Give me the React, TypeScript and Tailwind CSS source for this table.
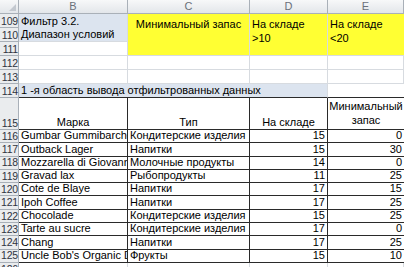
const data = [
    { n: 116, name: 'Gumbar Gummibarche', type: 'Кондитерские изделия', stock: 15, min: 0 },
    { n: 117, name: 'Outback Lager', type: 'Напитки', stock: 15, min: 30 },
    { n: 118, name: 'Mozzarella di Giovann', type: 'Молочные продукты', stock: 14, min: 0 },
    { n: 119, name: 'Gravad lax', type: 'Рыбопродукты', stock: 11, min: 25 },
    { n: 120, name: 'Cote de Blaye', type: 'Напитки', stock: 17, min: 15 },
    { n: 121, name: 'Ipoh Coffee', type: 'Напитки', stock: 17, min: 25 },
    { n: 122, name: 'Chocolade', type: 'Кондитерские изделия', stock: 15, min: 25 },
    { n: 123, name: 'Tarte au sucre', type: 'Кондитерские изделия', stock: 17, min: 0 },
    { n: 124, name: 'Chang', type: 'Напитки', stock: 17, min: 25 },
    { n: 125, name: "Uncle Bob's Organic D", type: 'Фрукты', stock: 15, min: 10 },
];

const colHead = 'flex items-center justify-center border-r border-b border-[#a9b0b8] bg-gradient-to-b from-[#f7f8f9] to-[#e3e6ea] text-[#6a707a]';
const rowHead = 'flex items-end justify-end border-r border-b border-[#a9b0b8] bg-[#eaecee] text-[#2f3440] text-[10.5px] tracking-[-0.2px] leading-none pb-[1px]';
const grid = 'border-r border-b border-[#d7dbe0] bg-white';
const tbl = 'border-r border-b border-[#2a2a2a] bg-white overflow-hidden whitespace-nowrap flex items-end pb-[1px] leading-none';

export default function App() {
    return (
        <div className="w-[404px] h-[267px] overflow-hidden bg-white font-['Liberation_Sans',Arial,sans-serif] text-[11px] text-black">
            <div className="grid grid-cols-[19px_109px_122px_78px_76px] grid-rows-[14px_repeat(6,14px)_32px_repeat(11,13.3px)]">
                {/* header */}
                <div className={`${colHead} relative`}>
                    <span className="absolute right-[2px] bottom-[2px] w-0 h-0 border-l-[7px] border-l-transparent border-b-[7px] border-b-[#c3c8cf]" />
                </div>
                <div className={colHead}>B</div>
                <div className={colHead}>C</div>
                <div className={colHead}>D</div>
                <div className={colHead}>E</div>

                {/* 109 */}
                <div className={rowHead}>109</div>
                <div className="bg-[#dce4ef] border-r border-[#d7dbe0] flex items-end pl-[2px] pb-[1px] leading-none">Фильтр 3.2.</div>
                <div className="row-span-3 bg-[#ffff33] border-r border-b border-[#d7dbe0] text-center pt-[3px] leading-[14px]">Минимальный запас</div>
                <div className="row-span-3 bg-[#ffff33] border-r border-b border-[#d7dbe0] pl-[2px] pt-[3px] leading-[14px]">На складе<br />&gt;10</div>
                <div className="row-span-3 bg-[#ffff33] border-b border-[#d7dbe0] pl-[2px] pt-[3px] leading-[14px]">На складе<br />&lt;20</div>

                {/* 110 */}
                <div className={rowHead}>110</div>
                <div className="bg-[#dce4ef] border-r border-b border-[#d7dbe0] flex items-end pl-[2px] pb-[1px] leading-none">Диапазон условий</div>

                {/* 111 */}
                <div className={rowHead}>111</div>
                <div className={grid} />

                {/* 112, 113 */}
                {[112, 113].map((n) => (
                    <div key={n} className="contents">
                        <div className={rowHead}>{n}</div>
                        <div className={grid} />
                        <div className={grid} />
                        <div className={grid} />
                        <div className={grid} />
                    </div>
                ))}

                {/* 114 */}
                <div className={rowHead}>114</div>
                <div className="col-span-3 bg-[#dce4ef] border-b border-r border-b-[#2a2a2a] border-r-[#d7dbe0] flex items-end pl-[2px] pb-[1px] leading-none whitespace-nowrap">1 -я область вывода отфильтрованных данных</div>
                <div className="border-b border-[#2a2a2a] bg-white" />

                {/* 115 */}
                <div className={rowHead}>115</div>
                <div className={`${tbl} justify-center bg-[#f3f3f3]`}>Марка</div>
                <div className={`${tbl} justify-center bg-[#f3f3f3]`}>Тип</div>
                <div className={`${tbl} justify-center bg-[#f3f3f3]`}>На складе</div>
                <div className="border-b border-[#2a2a2a] bg-white text-center leading-[14px] pt-[1px]">Минимальный<br />запас</div>

                {data.map((r) => (
                    <div key={r.n} className="contents">
                        <div className={rowHead}>{r.n}</div>
                        <div className={`${tbl} pl-[2px]`}>{r.name}</div>
                        <div className={`${tbl} pl-[2px]`}>{r.type}</div>
                        <div className={`${tbl} justify-end pr-[2px]`}>{r.stock}</div>
                        <div className="border-b border-[#2a2a2a] bg-white flex items-end justify-end pr-[2px] pb-[1px] leading-none">{r.min}</div>
                    </div>
                ))}

                {/* 126 */}
                <div className={rowHead}>126</div>
                <div className={grid} />
                <div className={grid} />
                <div className={grid} />
                <div className={grid} />
            </div>
        </div>
    );
}
